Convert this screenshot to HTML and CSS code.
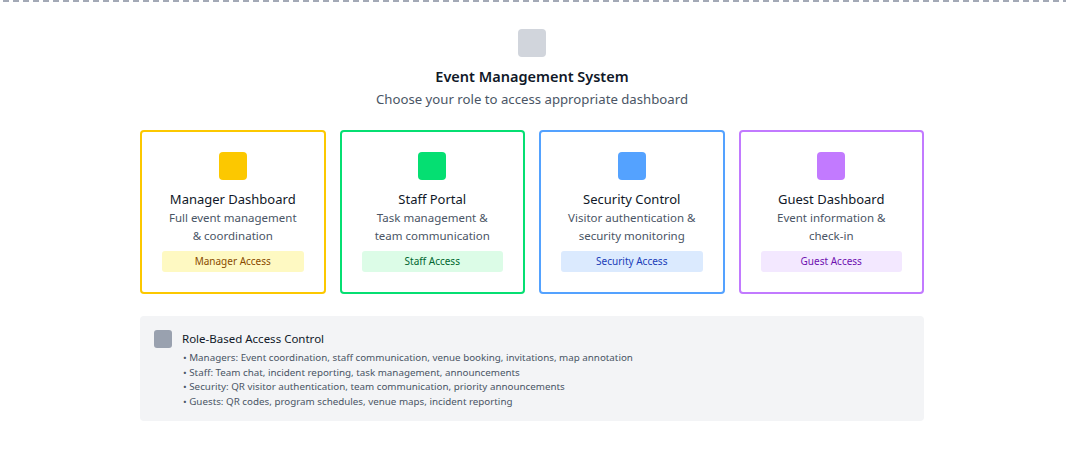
FILE: index.html
```html
<!DOCTYPE html>
<html lang="en">
<head>
<meta charset="utf-8">
<title>Event Management System</title>
<link rel="stylesheet" href="styles.css">
</head>
<body>
<div class="frame">
  <header class="hero">
    <div class="hero-icon"></div>
    <h1 class="hero-title">Event Management System</h1>
    <p class="hero-sub">Choose your role to access appropriate dashboard</p>
  </header>
  <section class="cards">
    <div class="card card-yellow">
      <div class="card-icon"></div>
      <h2 class="card-title">Manager Dashboard</h2>
      <p class="card-desc">Full event management &amp; coordination</p>
      <div class="badge">Manager Access</div>
    </div>
    <div class="card card-green">
      <div class="card-icon"></div>
      <h2 class="card-title">Staff Portal</h2>
      <p class="card-desc">Task management &amp; team communication</p>
      <div class="badge">Staff Access</div>
    </div>
    <div class="card card-blue">
      <div class="card-icon"></div>
      <h2 class="card-title">Security Control</h2>
      <p class="card-desc">Visitor authentication &amp; security monitoring</p>
      <div class="badge">Security Access</div>
    </div>
    <div class="card card-purple">
      <div class="card-icon"></div>
      <h2 class="card-title">Guest Dashboard</h2>
      <p class="card-desc">Event information &amp; check-in</p>
      <div class="badge">Guest Access</div>
    </div>
  </section>
  <section class="info">
    <div class="info-icon"></div>
    <div class="info-body">
      <h3 class="info-title">Role-Based Access Control</h3>
      <ul class="info-list">
        <li>• Managers: Event coordination, staff communication, venue booking, invitations, map annotation</li>
        <li>• Staff: Team chat, incident reporting, task management, announcements</li>
        <li>• Security: QR visitor authentication, team communication, priority announcements</li>
        <li>• Guests: QR codes, program schedules, venue maps, incident reporting</li>
      </ul>
    </div>
  </section>
</div>
</body>
</html>
```
FILE: styles.css
```css
* { box-sizing: border-box; }
html, body { margin: 0; padding: 0; background: #ffffff; }
body {
  font-family: "Noto Sans", "Open Sans", "Liberation Sans", sans-serif;
  color: #101828;
  overflow: hidden;
}
.frame {
  height: 449px;
  padding: 29px 2px 0 0;
  background-image: repeating-linear-gradient(90deg, #a3a9b6 0 6px, transparent 6px 10px);
  background-size: 100% 2px;
  background-position: 3px 0;
  background-repeat: no-repeat;
}
.hero {
  display: flex;
  flex-direction: column;
  align-items: center;
}
.hero-icon {
  width: 28px;
  height: 28px;
  border-radius: 4px;
  background: #d1d5dc;
  margin-bottom: 9px;
}
.hero-title {
  margin: 0;
  font-size: 14.5px;
  line-height: 20px;
  font-weight: 600;
  color: #101828;
}
.hero-sub {
  margin: 3px 0 0;
  font-size: 13.2px;
  line-height: 20px;
  color: #4a5565;
}
.cards {
  width: 784px;
  margin: 21px auto 0;
  display: grid;
  grid-template-columns: repeat(4, 1fr);
  gap: 14px;
}
.card {
  border: 2px solid;
  border-radius: 4px;
  padding: 20px;
  display: flex;
  flex-direction: column;
  align-items: center;
  text-align: center;
}
.card-icon {
  width: 28px;
  height: 28px;
  border-radius: 4px;
  margin: 0 0 9px;
}
.card-title {
  margin: 0;
  font-size: 13px;
  line-height: 20px;
  font-weight: 400;
  color: #101828;
}
.card-desc {
  margin: 0;
  padding: 0 4px;
  font-size: 11.5px;
  line-height: 18px;
  color: #4a5565;
}
.badge {
  margin-top: 6px;
  width: 100%;
  height: 21px;
  border-radius: 3px;
  font-size: 10px;
  line-height: 21px;
}
.card-yellow { border-color: #fcc800; }
.card-yellow .card-icon { background: #fcc800; }
.card-yellow .badge { background: #fef9c2; color: #894b00; }
.card-green { border-color: #05df72; }
.card-green .card-icon { background: #05df72; }
.card-green .badge { background: #dcfce7; color: #016630; }
.card-blue { border-color: #54a2ff; }
.card-blue .card-icon { background: #54a2ff; }
.card-blue .badge { background: #dbeafe; color: #193cb8; }
.card-purple { border-color: #c27aff; }
.card-purple .card-icon { background: #c27aff; }
.card-purple .badge { background: #f3e8ff; color: #6e11b0; }
.info {
  width: 784px;
  margin: 22px auto 0;
  background: #f3f4f6;
  border-radius: 4px;
  padding: 14px 14px 12px;
  display: flex;
  gap: 10px;
  align-items: flex-start;
}
.info-icon {
  width: 18px;
  height: 18px;
  border-radius: 3px;
  background: #99a1af;
  flex: none;
}
.info-title {
  margin: 0;
  font-size: 11.5px;
  line-height: 18px;
  font-weight: 400;
  color: #101828;
}
.info-list {
  list-style: none;
  margin: 3px 0 0;
  padding: 0 0 0 1px;
  font-size: 9.8px;
  line-height: 14.5px;
  color: #4a5565;
}
```
